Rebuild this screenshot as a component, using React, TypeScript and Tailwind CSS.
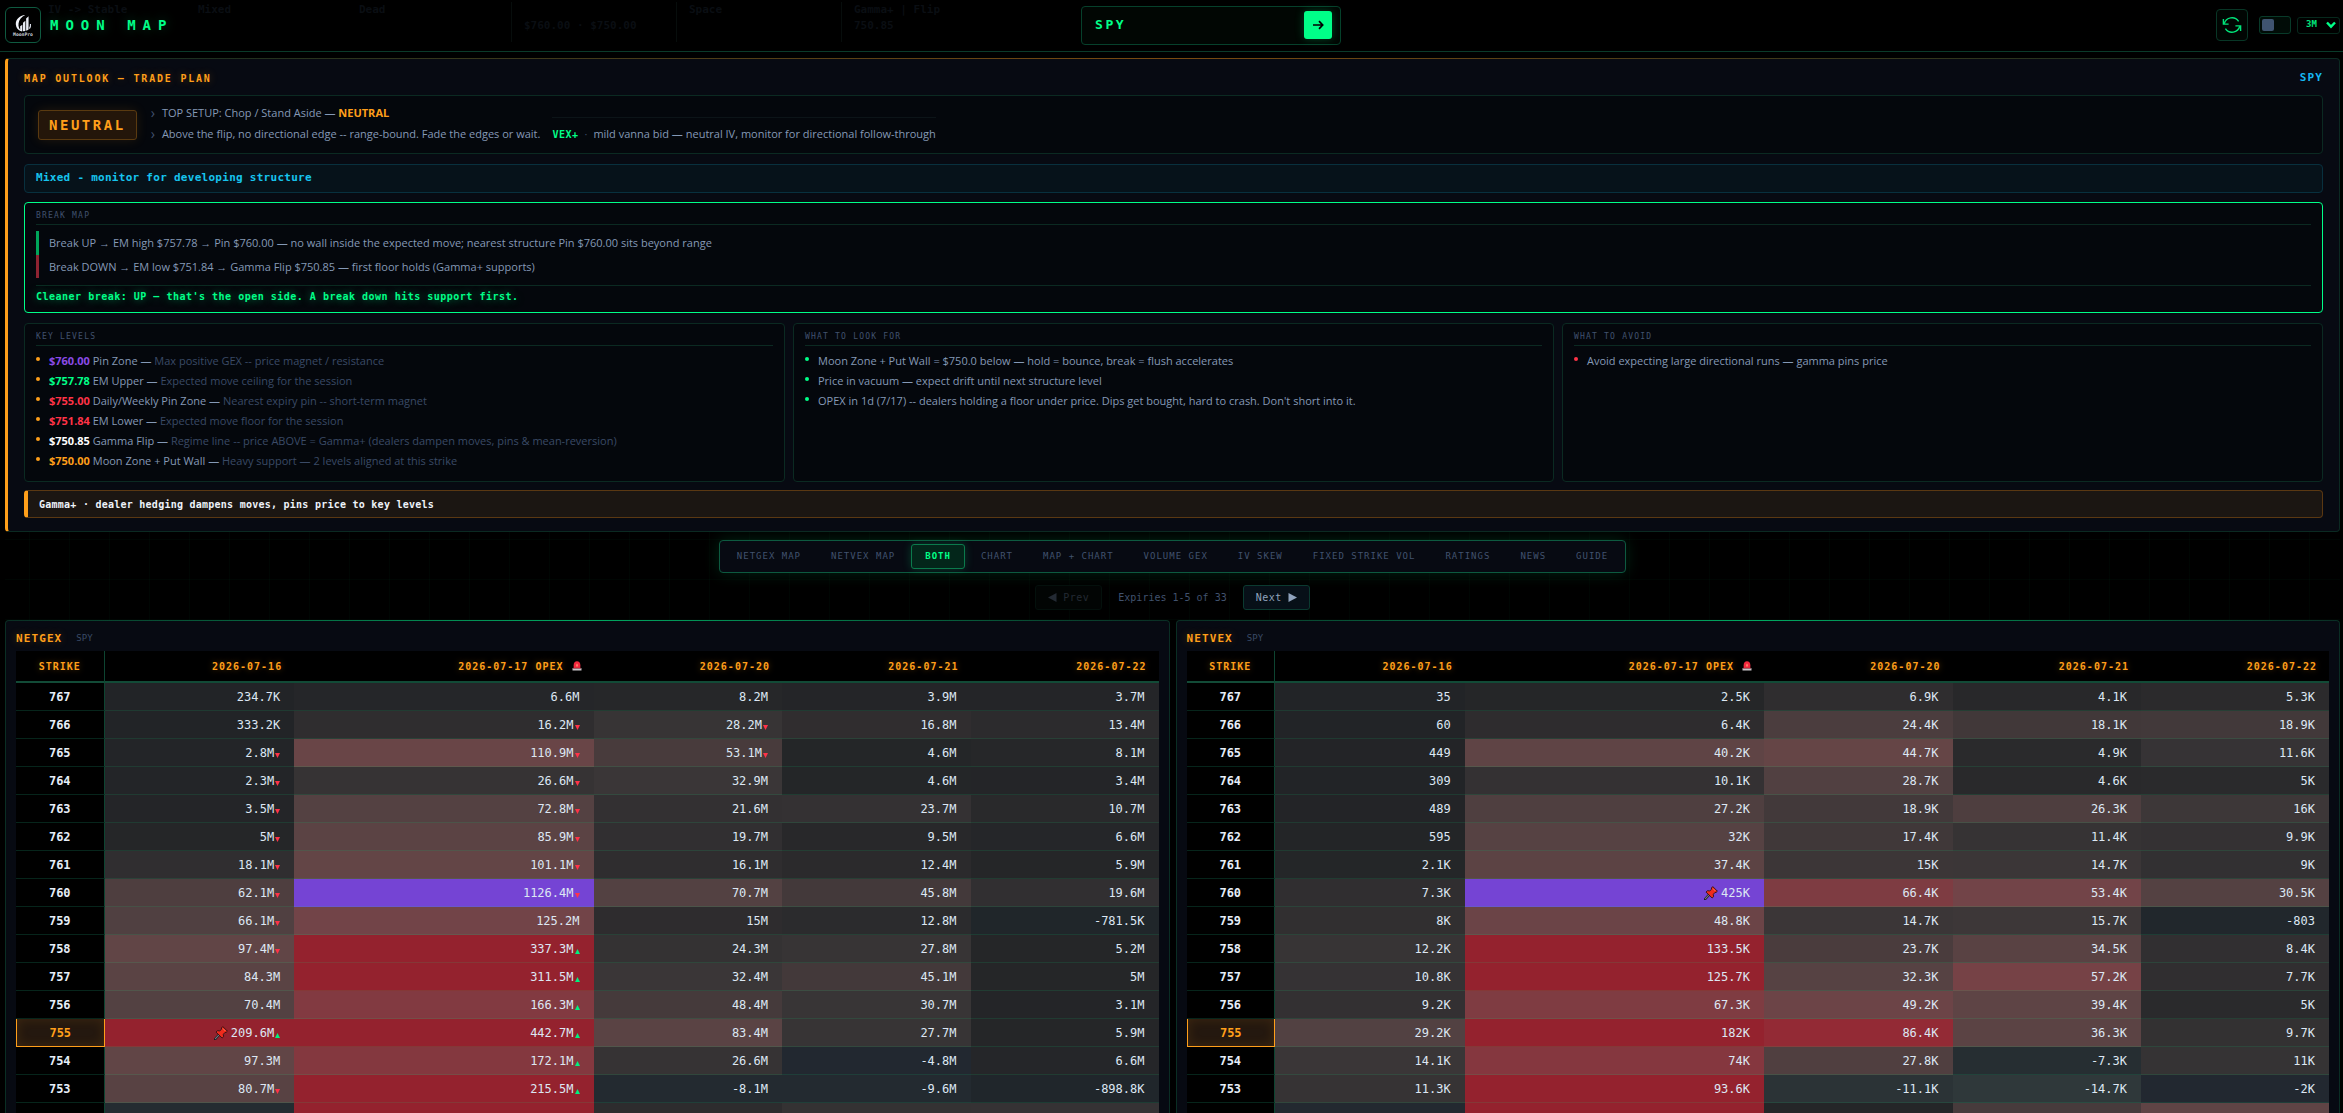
import React, { useState } from "react";

type Cell = { v: number; label: string; trend?: "up" | "down"; pin?: boolean; max?: boolean };
type Row = { strike: number; cells: Cell[] };

const DATES = ["2026-07-16", "2026-07-17 OPEX", "2026-07-20", "2026-07-21", "2026-07-22"];

const GEX_SOURCE: [number, string][] = [
  [767, "234.7K 6.6M 8.2M 3.9M 3.7M"],
  [766, "333.2K 16.2Mv 28.2Mv 16.8M 13.4M"],
  [765, "2.8Mv 110.9Mv 53.1Mv 4.6M 8.1M"],
  [764, "2.3Mv 26.6Mv 32.9M 4.6M 3.4M"],
  [763, "3.5Mv 72.8Mv 21.6M 23.7M 10.7M"],
  [762, "5Mv 85.9Mv 19.7M 9.5M 6.6M"],
  [761, "18.1Mv 101.1Mv 16.1M 12.4M 5.9M"],
  [760, "62.1Mv !1126.4Mv 70.7M 45.8M 19.6M"],
  [759, "66.1Mv 125.2M 15M 12.8M -781.5K"],
  [758, "97.4Mv 337.3M^ 24.3M 27.8M 5.2M"],
  [757, "84.3M 311.5M^ 32.4M 45.1M 5M"],
  [756, "70.4M 166.3M^ 48.4M 30.7M 3.1M"],
  [755, "*209.6M^ 442.7M^ 83.4M 27.7M 5.9M"],
  [754, "97.3M 172.1M^ 26.6M -4.8M 6.6M"],
  [753, "80.7Mv 215.5M^ -8.1M -9.6M -898.8K"],
  [752, "~-12M ~230M ~14M ~24M ~25M"],
];

const VEX_SOURCE: [number, string][] = [
  [767, "35 2.5K 6.9K 4.1K 5.3K"],
  [766, "60 6.4K 24.4K 18.1K 18.9K"],
  [765, "449 40.2K 44.7K 4.9K 11.6K"],
  [764, "309 10.1K 28.7K 4.6K 5K"],
  [763, "489 27.2K 18.9K 26.3K 16K"],
  [762, "595 32K 17.4K 11.4K 9.9K"],
  [761, "2.1K 37.4K 15K 14.7K 9K"],
  [760, "7.3K !*425K 66.4K 53.4K 30.5K"],
  [759, "8K 48.8K 14.7K 15.7K -803"],
  [758, "12.2K 133.5K 23.7K 34.5K 8.4K"],
  [757, "10.8K 125.7K 32.3K 57.2K 7.7K"],
  [756, "9.2K 67.3K 49.2K 39.4K 5K"],
  [755, "29.2K 182K 86.4K 36.3K 9.7K"],
  [754, "14.1K 74K 27.8K -7.3K 11K"],
  [753, "11.3K 93.6K -11.1K -14.7K -2K"],
  [752, "~-3K ~98K ~2K ~22K ~40K"],
];

function parse(source: [number, string][]): Row[] {
  return source.map(([strike, line]) => ({
    strike,
    cells: line.split(" ").map((raw) => {
      const hidden = raw.includes("~");
      const text = raw.replace(/[!*~v^]/g, "");
      const unit = text.endsWith("M") ? 1e6 : text.endsWith("K") ? 1e3 : 1;
      return {
        v: parseFloat(text) * unit,
        label: hidden ? "" : text,
        trend: raw.endsWith("v") ? "down" : raw.endsWith("^") ? "up" : undefined,
        pin: raw.includes("*"),
        max: raw.includes("!"),
      };
    }),
  }));
}

/* Heat scale: normalised exposure -> rgb */
const STOPS: [number, number[]][] = [
  [-35, [47, 56, 58]],
  [-15, [37, 45, 49]],
  [-5, [34, 40, 48]],
  [-0.5, [32, 38, 42]],
  [0, [34, 36, 39]],
  [8, [38, 39, 41]],
  [16, [47, 45, 47]],
  [30, [56, 53, 54]],
  [50, [70, 58, 59]],
  [70, [83, 65, 66]],
  [100, [98, 69, 70]],
  [125, [114, 68, 72]],
  [170, [131, 57, 64]],
  [203, [147, 42, 53]],
  [209, [148, 34, 46]],
];

function heat(n: number): string {
  if (n <= STOPS[0][0]) return `rgb(${STOPS[0][1].join(",")})`;
  for (let i = 1; i < STOPS.length; i++) {
    const [b, cb] = STOPS[i];
    const [a, ca] = STOPS[i - 1];
    if (n <= b) {
      const t = (n - a) / (b - a);
      return `rgb(${ca.map((c, k) => Math.round(c + (cb[k] - c) * t)).join(",")})`;
    }
  }
  return `rgb(${STOPS[STOPS.length - 1][1].join(",")})`;
}

function Siren() {
  return (
    <svg viewBox="0 0 12 12" className="ml-2 inline-block size-[10px] align-[-1px]" aria-label="OPEX alert" role="img">
      <path d="M2 8.600V5C2 2.200 3.600.4 6 .4S10 2.200 10 5v3.600z" fill="#f5293f" />
      <path d="m4.800 3 1.200 1.600L7.200 3v3.600H4.800z" fill="#ff7a66" />
      <path d="M.6 8.600h10.800v2.800H.6z" fill="#c9c4c8" />
      <path d="M1.200 8.200h9.600v.8H1.200z" fill="#8d2634" />
    </svg>
  );
}

function Pin() {
  return (
    <svg viewBox="0 0 14 14" className="mr-[3px] inline-block size-[14px] align-[-3px]" aria-label="Pin" role="img">
      <path d="M5.200 8.600 1 13.200" stroke="#1c1c20" strokeWidth="2.400" strokeLinecap="round" />
      <path d="M5.200 8.600 1.400 12.700" stroke="#77777f" strokeWidth="1.100" strokeLinecap="round" />
      <path d="M8.800.6 13.400 5.200 12 6.500l-1-.1-1.700 1.900.3 2.400-1.500 1.300L2 6.100 3.400 4.700l2.400.2 1.800-1.700-.2-1.200z" fill="#ee2b1c" stroke="#301012" strokeWidth=".9" strokeLinejoin="round" />
      <path d="m9 2.600 2.400 2.400" stroke="#ff7a5c" strokeWidth=".9" />
    </svg>
  );
}

function Trend({ dir }: { dir: "up" | "down" }) {
  return (
    <svg
      viewBox="0 0 6 6"
      className="ml-px inline-block size-[5px] align-[-1px]"
      role="img"
      aria-label={dir}
      fill={dir === "up" ? "#00f080" : "#ff3347"}
    >
      <path d={dir === "up" ? "M3 0 6 6H0z" : "M3 6 0 0h6z"} />
    </svg>
  );
}

function HeatTable({ title, rows, scale }: { title: string; rows: Row[]; scale: number }) {
  return (
    <section className="relative min-w-0 flex-1 rounded-t border border-b-0 border-[#0a2e24] bg-[#070a12] px-[10px] pt-[6px]">
      <div className="absolute inset-x-0 -top-px h-px bg-linear-to-r from-transparent via-[#00a860] to-transparent" />
      <div className="flex h-6 items-center gap-[14px] font-['DejaVu_Sans_Mono',monospace]">
        <h2 className="text-[11px] font-bold tracking-widest text-[#ff9f1a] [text-shadow:0_0_8px_rgba(255,159,26,0.3)]">{title}</h2>
        <span className="text-[9px] text-[#3a4a66]">SPY</span>
      </div>
      <table className="w-full table-fixed border-separate border-spacing-0 font-['DejaVu_Sans_Mono',monospace] text-[12px] text-[#dde7f3]">
        <colgroup>
          <col className="w-[7.75%]" />
          <col className="w-[16.6%]" />
          <col className="w-[26.2%]" />
          <col className="w-[16.5%]" />
          <col className="w-[16.5%]" />
          <col />
        </colgroup>
        <thead>
          <tr className="bg-black text-[10px] tracking-widest text-[#ff9f1a] [text-shadow:0_0_6px_rgba(255,159,26,0.35)]">
            <th scope="col" className="h-8 border-r border-b-2 border-r-[#0d4431] border-b-[#124b37] text-center">STRIKE</th>
            {DATES.map((d) => (
              <th key={d} scope="col" className="h-8 border-b-2 border-[#124b37] pr-3 text-right">
                {d}
                {d.endsWith("OPEX") && <Siren />}
              </th>
            ))}
          </tr>
        </thead>
        <tbody>
          {rows.map((r) => (
            <tr key={r.strike}>
              <th
                scope="row"
                className={
                  r.strike === 755
                    ? "h-7 border border-t-0 border-[#ff9f1a] bg-[#24180f] text-center font-bold text-[#ff9f1a] shadow-[inset_0_0_12px_rgba(255,159,26,0.12)]"
                    : "h-7 border-r border-b border-r-[#0d4431] border-b-[#06251b] bg-black text-center font-bold text-[#e6eef8]"
                }
              >
                {r.cells[0].label && r.strike}
              </th>
              {r.cells.map((c, i) => (
                <td
                  key={i}
                  className="h-7 border-b border-[#00ff88]/10 pr-[14px] text-right whitespace-nowrap"
                  style={{ backgroundColor: c.max ? "#7544d4" : heat(c.v / scale) }}
                >
                  {c.pin && <Pin />}
                  {c.label}
                  {c.trend && <Trend dir={c.trend} />}
                </td>
              ))}
            </tr>
          ))}
        </tbody>
      </table>
    </section>
  );
}

const TABS = ["NETGEX MAP", "NETVEX MAP", "BOTH", "CHART", "MAP + CHART", "VOLUME GEX", "IV SKEW", "FIXED STRIKE VOL", "RATINGS", "NEWS", "GUIDE"];

const LEVELS = [
  { price: "$760.00", cls: "text-[#8b4be8]", name: "Pin Zone", note: "Max positive GEX -- price magnet / resistance" },
  { price: "$757.78", cls: "text-[#00ff88]", name: "EM Upper", note: "Expected move ceiling for the session" },
  { price: "$755.00", cls: "text-[#ff3347]", name: "Daily/Weekly Pin Zone", note: "Nearest expiry pin -- short-term magnet" },
  { price: "$751.84", cls: "text-[#ff3347]", name: "EM Lower", note: "Expected move floor for the session" },
  { price: "$750.85", cls: "text-white", name: "Gamma Flip", note: "Regime line -- price ABOVE = Gamma+ (dealers dampen moves, pins & mean-reversion)" },
  { price: "$750.00", cls: "text-[#ff9f1a]", name: "Moon Zone + Put Wall", note: "Heavy support — 2 levels aligned at this strike" },
];

function BoxTitle({ children }: { children: React.ReactNode }) {
  return (
    <h3 className="border-b border-[#0b2a22] pb-[2px] font-['DejaVu_Sans_Mono',monospace] text-[8px] leading-3 tracking-[0.15em] text-[#41526e]">
      {children}
    </h3>
  );
}

function Bullet({ dot, children }: { dot: string; children: React.ReactNode }) {
  return (
    <li className="flex h-5 gap-[9px] leading-5">
      <span className={"mt-[6px] h-1 w-1 shrink-0 rounded-full " + dot} />
      <span>{children}</span>
    </li>
  );
}

const BOX = "rounded-sm border border-[#0b2a22] bg-[#04070c]";

function GhostStrip() {
  const col = "h-10 w-[165px] shrink-0 border-r border-[#070d0c] pl-3";
  return (
    <div aria-hidden="true" className="pointer-events-none absolute top-0 left-[17px] flex pt-[2px] text-[11px] leading-4 font-bold text-[#0a0e13]">
      <div className="w-[165px] pl-[31px]">IV -&gt; Stable</div>
      <div className="w-[165px] pl-4">Mixed</div>
      <div className={col}>Dead</div>
      <div className={col}><div className="mt-4 whitespace-nowrap">$760.00 · $750.00</div></div>
      <div className={col}>Space</div>
      <div className="w-[165px] pl-3">Gamma+ | Flip<br />750.85</div>
    </div>
  );
}

export default function App() {
  const [tab, setTab] = useState("BOTH");
  return (
    <div className="flex h-screen flex-col overflow-hidden bg-black font-['Open_Sans',sans-serif] text-[11px] text-[#8499b6]">
      <header className="relative flex h-[52px] shrink-0 items-center border-b border-[#0a3a2a] bg-black pr-[3px] pb-px pl-[5px] font-['DejaVu_Sans_Mono',monospace]">
        <GhostStrip />
        <div className="relative flex w-[201px] items-center gap-[9px]">
          <svg viewBox="0 0 36 36" className="size-9 shrink-0 rounded-md border border-[#0f5a40] bg-black" role="img" aria-label="MoonPro">
            <path d="M20.500 7.500C14 8 10 12.500 10.400 17.500c.3 4 2.600 6.600 6.600 7.300-3-2.300-4.200-4.900-3.700-8.400.5-3.800 3-6.900 7.200-8.900z" fill="#f2f4fa" />
            <path d="M15 24.300v-5l2.300-1.500v6.700zM18 24.600v-9l2.500-2v10.800zM21.300 24.200V11l2.600-2.300v14c-.8.700-1.600 1.200-2.600 1.500z" fill="#e9ecf4" />
            <path d="M24.800 21.800c1-1.500 1.300-3 1.100-4.800" stroke="#dfe3ee" strokeWidth="1.200" fill="none" />
            <text x="18" y="29.500" textAnchor="middle" fontSize="5" fontWeight="bold" fill="#cdd2de">MoonPro</text>
          </svg>
          <h1 className="text-[14px] font-bold tracking-[7px] whitespace-nowrap text-[#00ff88] [text-shadow:0_0_12px_rgba(0,255,136,0.25)]">MOON MAP</h1>
        </div>
        <form className="relative flex flex-1 justify-center" onSubmit={(e) => e.preventDefault()}>
          <div className="flex h-[39px] w-[260px] items-center rounded border border-[#06402b] bg-[#010603] pr-2 pl-[13px]">
            <input
              aria-label="Ticker"
              defaultValue="SPY"
              className="min-w-0 flex-1 bg-transparent text-[13px] font-bold tracking-[0.2em] text-[#00ff88] outline-none"
            />
            <button aria-label="Go" className="grid size-7 place-items-center rounded-[3px] bg-[#00ff88] text-black shadow-[0_0_10px_rgba(0,255,136,0.25)]">
              <svg viewBox="0 0 12 12" className="size-3" fill="none" stroke="currentColor" strokeWidth="1.700">
                <path d="M1 6h9.500M7 2.200 10.700 6 7 9.800" />
              </svg>
            </button>
          </div>
        </form>
        <div className="relative flex items-center">
          <button aria-label="Refresh" className="mr-[11px] grid size-8 place-items-center rounded border border-[#083626] bg-[#010603] text-[#00e57a]">
            <svg viewBox="0 0 20 20" className="size-5" fill="none" stroke="currentColor" strokeWidth="1.400">
              <path d="M2.200 8.700A8 8 0 0 1 16.600 6.400M17.800 11.300A8 8 0 0 1 3.400 13.600" />
              <path d="M1.400 3.900v5.200h5.200M18.600 16.100v-5.200h-5.200" />
            </svg>
          </button>
          <label className="relative mr-[6px] flex h-[18px] w-8 items-center rounded-[3px] border border-[#083a29] bg-[#010c07] px-[2px]">
            <input type="checkbox" aria-label="Auto refresh" className="peer absolute inset-0 appearance-none" />
            <span className="size-3 rounded-[2px] bg-[#3f5470] peer-checked:ml-auto peer-checked:bg-[#00ff88]" />
          </label>
          <div className="relative flex items-center">
            <select aria-label="Interval" defaultValue="3M" className="h-[17px] w-[43px] appearance-none rounded-[3px] border border-[#06291d] bg-black pl-2 text-[9px] font-bold text-[#00e57a]">
              <option>1M</option>
              <option>3M</option>
              <option>5M</option>
            </select>
            <svg viewBox="0 0 10 8" className="pointer-events-none absolute right-1 h-2 w-[10px]" fill="none" stroke="#00ff88" strokeWidth="2.400">
              <path d="M1 1.500 5 5.700 9 1.500" />
            </svg>
          </div>
        </div>
      </header>

      <main className="flex flex-col pt-[6px] pr-[3px] pl-[5px]">
        <section className="relative rounded border border-l-[3px] border-[#0b2a22] border-l-[#ff9f1a] bg-[#070a12] px-4 pt-[11px] pb-[13px]">
          <div className="absolute inset-x-0 -top-px h-px bg-linear-to-r from-transparent via-[#7a4a10] to-transparent" />
          <div className="flex h-4 items-center justify-between font-['DejaVu_Sans_Mono',monospace] font-bold">
            <h2 className="text-[10px] tracking-[0.18em] text-[#ff9f1a] [text-shadow:0_0_8px_rgba(255,159,26,0.3)]">MAP OUTLOOK — TRADE PLAN</h2>
            <span className="text-[11px] tracking-widest text-[#16b8f3]">SPY</span>
          </div>

          <div className={"mt-[9px] flex h-[59px] items-start px-[13px] pt-[6px] " + BOX}>
            <div className="mt-2 flex h-[30px] items-center rounded-[3px] border border-[#5a3a10] bg-[#24160a] px-[10px] font-['DejaVu_Sans_Mono',monospace] text-[14px] font-bold tracking-[0.18em] text-[#ff9f1a] shadow-[0_0_12px_rgba(255,159,26,0.12)]">
              NEUTRAL
            </div>
            <ul className="ml-[14px] leading-[21px]">
              <li className="flex gap-[7px]">
                <span className="text-[14px] text-[#41526e]">›</span>
                <span>TOP SETUP: Chop / Stand Aside — <b className="text-[#ff9f1a]">NEUTRAL</b></span>
              </li>
              <li className="flex gap-[7px]">
                <span className="text-[14px] text-[#41526e]">›</span>
                <span>Above the flip, no directional edge -- range-bound. Fade the edges or wait.</span>
              </li>
            </ul>
            <div className="mt-[15px] ml-3 border-t border-[#0c1418] pt-[6px] leading-5">
              <b className="font-['DejaVu_Sans_Mono',monospace] text-[10px] tracking-wider text-[#00ff88]">VEX+</b>
              <span className="mx-[6px] text-[#3a4a63]">·</span>
              mild vanna bid — neutral IV, monitor for directional follow-through
            </div>
          </div>

          <p className="mt-[10px] flex h-[29px] items-center rounded-sm border border-[#08303e] bg-[#06121a] px-[11px] font-['DejaVu_Sans_Mono',monospace] text-[11px] font-bold tracking-wide text-[#16c4ee]">
            Mixed - monitor for developing structure
          </p>

          <div className="mt-[9px] rounded-sm border border-[#00ff88] bg-[#04070c] px-[11px] pt-[7px] pb-[5px]">
            <BoxTitle>BREAK MAP</BoxTitle>
            <p className="mt-[6px] border-l-[3px] border-[#00a55a] pl-[10px] leading-6">
              Break UP → EM high $757.78 → Pin $760.00 — no wall inside the expected move; nearest structure Pin $760.00 sits beyond range
            </p>
            <p className="border-l-[3px] border-[#8f2331] pl-[10px] leading-[23px]">
              Break DOWN → EM low $751.84 → Gamma Flip $750.85 — first floor holds (Gamma+ supports)
            </p>
            <p className="mt-[7px] border-t border-[#0b2a22] pt-px font-['DejaVu_Sans_Mono',monospace] text-[10px] leading-5 font-bold tracking-wider text-[#00ff88] [text-shadow:0_0_8px_rgba(0,255,136,0.5)]">
              Cleaner break: UP — that's the open side. A break down hits support first.
            </p>
          </div>

          <div className="mt-[10px] grid grid-cols-3 gap-2">
            <div className={"px-[11px] pt-[7px] pb-[10px] " + BOX}>
              <BoxTitle>KEY LEVELS</BoxTitle>
              <ul className="mt-[5px]">
                {LEVELS.map((l) => (
                  <Bullet key={l.price} dot="bg-[#ff9f1a]">
                    <b className={l.cls}>{l.price}</b> {l.name} — <span className="text-[#3a4a66]">{l.note}</span>
                  </Bullet>
                ))}
              </ul>
            </div>
            <div className={"px-[11px] pt-[7px] pb-[10px] " + BOX}>
              <BoxTitle>WHAT TO LOOK FOR</BoxTitle>
              <ul className="mt-[5px]">
                <Bullet dot="bg-[#00ff88]">Moon Zone + Put Wall = $750.0 below — hold = bounce, break = flush accelerates</Bullet>
                <Bullet dot="bg-[#00ff88]">Price in vacuum — expect drift until next structure level</Bullet>
                <Bullet dot="bg-[#00ff88]">OPEX in 1d (7/17) -- dealers holding a floor under price. Dips get bought, hard to crash. Don't short into it.</Bullet>
              </ul>
            </div>
            <div className={"px-[11px] pt-[7px] pb-[10px] " + BOX}>
              <BoxTitle>WHAT TO AVOID</BoxTitle>
              <ul className="mt-[5px]">
                <Bullet dot="bg-[#ff3347]">Avoid expecting large directional runs — gamma pins price</Bullet>
              </ul>
            </div>
          </div>

          <p className="mt-2 flex h-7 items-center rounded-sm border border-l-4 border-[#5a3812] border-l-[#ff9f1a] bg-[#1b1612] px-[11px] font-['DejaVu_Sans_Mono',monospace] text-[10px] font-bold tracking-wide text-[#eef3fa]">
            Gamma+ · dealer hedging dampens moves, pins price to key levels
          </p>
        </section>

        <div className="flex flex-col items-center bg-[linear-gradient(rgba(0,255,136,0.025)_1px,transparent_1px),linear-gradient(90deg,rgba(0,255,136,0.025)_1px,transparent_1px)] bg-size-[40px_40px] bg-position-[24px_7px] pt-2 pb-[10px] font-['DejaVu_Sans_Mono',monospace]">
          <nav className="flex gap-[2px] rounded border border-[#0d5a40] bg-[#070a12] p-[3px] shadow-[0_0_16px_rgba(0,255,136,0.14)]">
            {TABS.map((t) => (
              <button
                key={t}
                onClick={() => setTab(t)}
                className={
                  t === tab
                    ? "h-[25px] rounded-[3px] border border-[#0b7a4c] bg-[#03261a] px-[13px] text-[9px] font-bold tracking-[1px] text-[#00ff88] shadow-[0_0_10px_rgba(0,255,136,0.2)]"
                    : "h-[25px] rounded-[3px] border border-transparent px-[13px] text-[9px] tracking-[1px] text-[#41526e]"
                }
              >
                {t}
              </button>
            ))}
          </nav>
          <div className="mt-3 flex items-center gap-4 text-[10px]">
            <button disabled className="flex h-[25px] items-center gap-[6px] rounded-[3px] border border-[#04100c] bg-[#020504] px-3 tracking-wider text-[#232a33]">
              <svg viewBox="0 0 9 9" className="size-[9px]" fill="currentColor" aria-hidden="true"><path d="M8.500 0v9L0 4.500z" /></svg>
              Prev
            </button>
            <span className="text-[#41526e]">Expiries 1-5 of 33</span>
            <button className="flex h-[25px] items-center gap-[6px] rounded-[3px] border border-[#0b3a30] bg-[#071018] px-3 tracking-wider text-[#8fa3bd]">
              Next
              <svg viewBox="0 0 9 9" className="size-[9px]" fill="currentColor" aria-hidden="true"><path d="M.5 0v9L9 4.500z" /></svg>
            </button>
          </div>
        </div>

        <div className="flex gap-[6px]">
          <HeatTable title="NETGEX" rows={parse(GEX_SOURCE)} scale={1e6} />
          <HeatTable title="NETVEX" rows={parse(VEX_SOURCE)} scale={1e3 / 2.35} />
        </div>
      </main>
    </div>
  );
}
